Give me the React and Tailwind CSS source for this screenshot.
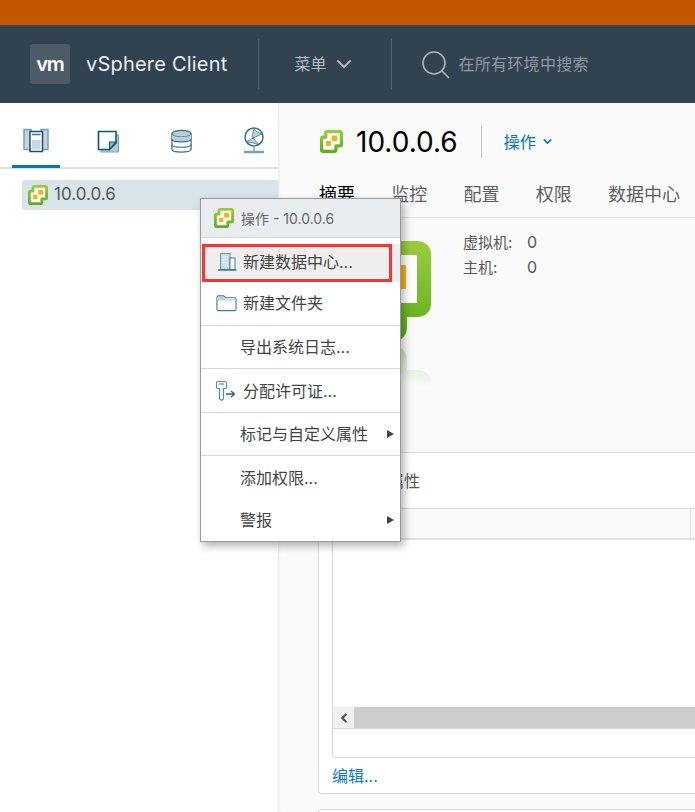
import React from "react";
import { ChevronDown, ChevronLeft } from "lucide-react";

// two overlapping green squares with orange dots
const VcenterIcon = ({ className }) => (
  <svg viewBox="0 0 100 100" className={className}>
    <defs>
      <linearGradient id="vc-green" x1="0" y1="0" x2="0" y2="1">
        <stop offset="0" stopColor="#96cc3c" />
        <stop offset="1" stopColor="#5fae1c" />
      </linearGradient>
    </defs>
    <path
      d="M32 7 H86 Q93 7 93 14 V62 Q93 69 86 69 H69 V86 Q69 93 62 93 H14 Q7 93 7 86 V38 Q7 31 14 31 H25 V14 Q25 7 32 7 Z"
      fill="#fff"
      stroke="url(#vc-green)"
      strokeWidth="14"
      strokeLinejoin="round"
    />
    <rect x="51" y="24" width="24" height="24" fill="#f9b117" />
    <rect x="25" y="48" width="22" height="22" fill="#f9b117" />
  </svg>
);

const HostsIcon = () => (
  <svg viewBox="0 0 28 28" className="h-[28px] w-[28px]">
    <path d="M2 2.5 H9 V22.5 H2 Z M19 2.5 H26 V22.5 H19 Z" fill="#c5d4dc" stroke="#7f9fb0" strokeWidth="1.5" />
    <rect x="8" y="4.5" width="12.5" height="20" fill="#fff" stroke="#0f5578" strokeWidth="1.5" />
    <rect x="10" y="13" width="8.5" height="9.5" fill="#c9d8df" />
    <path d="M10 7.5 H18.5" stroke="#2f7396" strokeWidth="1.5" />
  </svg>
);

const VmsIcon = () => (
  <svg viewBox="0 0 24 24" className="h-[24px] w-[24px]">
    <rect x="4" y="5" width="17.5" height="17" fill="#b7cad4" stroke="#7f9fb0" strokeWidth="1" />
    <path d="M1.5 1.5 H19 V13 L12.5 19.5 H1.5 Z" fill="#fff" stroke="#0f5578" strokeWidth="1.6" />
    <path d="M19 12 H12.5 V19.5 Z" fill="#9db9c7" stroke="#0f5578" strokeWidth="1.2" />
  </svg>
);

const StorageIcon = () => (
  <svg viewBox="0 0 24 26" className="h-[25px] w-[23px]">
    <path d="M2 5 V21 C2 25 22 25 22 21 V5 Z" fill="#fff" stroke="#2f7396" strokeWidth="1.3" />
    <ellipse cx="12" cy="5" rx="10" ry="3.5" fill="#bccdd6" stroke="#2f7396" strokeWidth="1.3" />
    <path d="M2 5 C2 9.5 22 9.5 22 5 V10 C22 14 2 14 2 10 Z" fill="#bccdd6" />
    <path d="M2 10.5 C2 14.5 22 14.5 22 10.5 M2 16 C2 20 22 20 22 16" fill="none" stroke="#2f7396" strokeWidth="1.3" />
  </svg>
);

const NetworkIcon = () => (
  <svg viewBox="0 0 24 28" className="h-[28px] w-[24px]">
    <circle cx="12" cy="10" r="9" fill="#fff" stroke="#2f7396" strokeWidth="1.5" />
    <path d="M12 2 C14 5 17 6 20 7 L11 11 L17 18 C13 16 8 15 4 15 L11 11 C10 8 11 5 12 2 Z" fill="#c3d3db" stroke="#2f7396" strokeWidth="0.8" />
    <path d="M12 19 V24" stroke="#7f9fb0" strokeWidth="1.5" />
    <path d="M2 25 H22" stroke="#7f9fb0" strokeWidth="2.5" />
  </svg>
);

const DatacenterIcon = () => (
  <svg viewBox="0 0 20 20" className="h-[20px] w-[20px]">
    <rect x="3.5" y="1.5" width="9.5" height="16" fill="#c5d7e0" stroke="#6f97ab" strokeWidth="1" />
    <path d="M5.5 4.5 H11.5 M5.5 7.5 H11.5 M5.5 10.5 H11.5 M5.5 13.5 H11.5" stroke="#fff" strokeWidth="1.4" strokeDasharray="1.4 0.6" />
    <rect x="13" y="6" width="5" height="11.5" fill="#fff" stroke="#3f7f9f" strokeWidth="1" />
    <path d="M1 18 H19.5" stroke="#2f6f8f" strokeWidth="1.4" />
  </svg>
);

const FolderIcon = () => (
  <svg viewBox="0 0 22 18" className="h-[18px] w-[21px]">
    <path d="M1 3 Q1 1.5 2.5 1.5 H8 L10 3.5 H20 Q21 3.5 21 5 V15.5 Q21 17 19.5 17 H2.5 Q1 17 1 15.5 Z" fill="#fff" stroke="#3f7f9f" strokeWidth="1.2" />
    <path d="M1.5 2.5 H8 L9.5 5 H20.5 V6.5 H1.5 Z" fill="#bcd0da" />
  </svg>
);

const LicenseIcon = () => (
  <svg viewBox="0 0 22 22" className="h-[22px] w-[22px]">
    <path d="M1.5 3 Q1.5 1.5 3 1.5 H10 Q11.5 1.5 11.5 3 V7 Q11.5 8.5 10 8.5 H8.5 V19 L6.5 20.5 L4.5 19 V8.5 H3 Q1.5 8.5 1.5 7 Z" fill="#fff" stroke="#4a90b0" strokeWidth="1.2" />
    <path d="M4 4 H9" stroke="#4a90b0" strokeWidth="1.2" />
    <path d="M11 14 H19 M16 11 L19.5 14 L16 17" fill="none" stroke="#1f6a8c" strokeWidth="1.4" />
  </svg>
);

const SearchIcon = () => (
  <svg viewBox="0 0 30 30" className="h-[30px] w-[30px]" fill="none" stroke="#a9b2b9" strokeWidth="1.6">
    <circle cx="13" cy="13" r="11" />
    <path d="M21 21 L28 28" />
  </svg>
);

const Arrow = () => (
  <span className="absolute right-[6px] h-0 w-0 border-y-[4px] border-l-[7px] border-y-transparent border-l-[#444]" />
);

const MenuRow = ({ icon, label, arrow, className = "", children }) => (
  <div className={`relative flex items-center text-[16px] text-[#444] ${className}`}>
    {icon ? <span className="flex w-[42px] justify-end pr-[6px]">{icon}</span> : null}
    <span className={icon ? "" : "pl-[39px]"}>{label}</span>
    {arrow ? <Arrow /> : null}
    {children}
  </div>
);

const ContextMenu = () => (
  <div className="absolute left-[200px] top-[198px] w-[201px] border border-[#9a9a9a] bg-white shadow-[3px_4px_8px_rgba(0,0,0,0.3)]">
    <div className="flex h-[39px] items-center gap-[7px] border-b border-[#d7d7d7] bg-[#eaedf0] pl-[13px] text-[14px] text-[#666]">
      <VcenterIcon className="h-[20px] w-[20px]" />
      <span>操作 - 10.0.0.6</span>
    </div>
    <MenuRow icon={<DatacenterIcon />} label="新建数据中心..." className="mt-[6px] h-[38px] bg-[#eeeeee] pb-[3px]">
      {/* red marker drawn on top of the row */}
      <span className="absolute left-[1px] top-0 h-full w-[190px] border-[3px] border-[#fb3333]" />
    </MenuRow>
    <MenuRow icon={<FolderIcon />} label="新建文件夹" className="h-[44px] border-b border-[#d7d7d7] pb-[1px]" />
    <MenuRow label="导出系统日志..." className="h-[43px] border-b border-[#d7d7d7]" />
    <MenuRow icon={<LicenseIcon />} label="分配许可证..." className="h-[44px] border-b border-[#d7d7d7]" />
    <MenuRow label="标记与自定义属性" arrow className="h-[43px] border-b border-[#d7d7d7]" />
    <MenuRow label="添加权限..." className="h-[44px]" />
    <MenuRow label="警报" arrow className="h-[41px] pb-[2px]" />
  </div>
);

const Sidebar = () => (
  <aside className="w-[278px] shrink-0 bg-white">
    <div className="flex h-[66px] items-end border-b-2 border-[#e0e0e0]">
      <div className="ml-[12px] flex h-[41px] w-[48px] justify-center border-b-[3px] border-[#0079b8] -mb-[1px]">
        <HostsIcon />
      </div>
      <div className="ml-[37px] flex h-[41px] w-[24px] pt-[3px] -mb-[1px]">
        <VmsIcon />
      </div>
      <div className="ml-[49px] flex h-[41px] pt-[2px] -mb-[1px]">
        <StorageIcon />
      </div>
      <div className="ml-[49px] flex h-[41px] -mb-[1px]">
        <NetworkIcon />
      </div>
    </div>
    <div className="ml-[22px] mt-[11px] flex h-[30px] items-center gap-[6px] rounded-l-[3px] bg-[#d9e4ea] pl-[6px] text-[17px] text-[#565656]">
      <VcenterIcon className="h-[20px] w-[20px]" />
      <span>10.0.0.6</span>
    </div>
  </aside>
);

const Main = () => (
  <main className="min-w-0 flex-1 overflow-hidden bg-[#fafafa] shadow-[inset_3px_0_3px_-2px_rgba(0,0,0,0.08)]">
    <div className="flex h-[75px] items-center pl-[42px] pt-[2px]">
      <VcenterIcon className="h-[23px] w-[23px]" />
      <span className="ml-[13px] text-[28px] text-black">10.0.0.6</span>
      <span className="ml-[23px] h-[32px] w-px bg-[#c4c4c4]" />
      <span className="ml-[22px] text-[16px] text-[#0079b8]">操作</span>
      <ChevronDown className="ml-[5px] h-[13px] w-[13px] text-[#0079b8]" strokeWidth={3} />
    </div>
    <div className="flex h-[40px] items-center gap-[36.25px] border-b border-[#e0e0e0] pb-[6px] pl-[41px] text-[18px] text-[#5f5f5f]">
      <span className="text-black">摘要</span>
      <span>监控</span>
      <span>配置</span>
      <span>权限</span>
      <span className="whitespace-nowrap">数据中心</span>
    </div>
    <div className="flex h-[234px]">
      <div className="ml-[53px] mt-[23px] w-[100px]">
        <VcenterIcon className="h-[100px] w-[100px]" />
        {/* faded mirror image under the big icon */}
        <div className="mt-[5px] h-[42px] overflow-hidden [mask-image:linear-gradient(to_bottom,rgba(0,0,0,0.3),transparent)]">
          <VcenterIcon className="h-[100px] w-[100px] -scale-y-100" />
        </div>
      </div>
      <div className="ml-[32px] mt-[12px] text-[15px] leading-[25px] text-[#565656]">
        <div className="flex">
          <span className="w-[64px]">虚拟机:</span>
          <span className="text-[16px]">0</span>
        </div>
        <div className="flex">
          <span className="w-[64px]">主机:</span>
          <span className="text-[16px]">0</span>
        </div>
      </div>
    </div>
    <section className="ml-[40px] w-[440px] rounded-[3px] border border-[#d7d7d7] bg-white">
      <div className="flex h-[55px] items-center pl-[21px] text-[16px] text-[#565656]">自定义属性</div>
      <div className="ml-[13px] flex h-[250px] flex-col rounded-b-[3px] border border-[#d7d7d7]">
        <div className="h-[31px] border-b-2 border-[#e0e0e0] bg-[#fafafa]">
          <div className="ml-[357px] h-full border-l border-[#e0e0e0]" />
        </div>
        <div className="flex-1" />
        <div className="flex h-[22px] border-b border-[#d7d7d7] bg-[#cdcdcd]">
          <div className="flex w-[21px] items-center justify-center bg-[#f0f0f0]">
            <ChevronLeft className="h-[14px] w-[14px] text-[#555]" strokeWidth={4} />
          </div>
        </div>
        <div className="h-[28px]" />
      </div>
      <div className="flex h-[35px] items-center pl-[13px] text-[16px] text-[#0a7cd6]">编辑...</div>
    </section>
    <section className="ml-[40px] mt-[15px] h-[20px] w-[440px] rounded-t-[3px] border border-[#d7d7d7] bg-white" />
  </main>
);

export default function App() {
  return (
    <div className="relative h-[812px] w-[695px] overflow-hidden bg-white font-['Inter','Noto_Sans_CJK_SC',sans-serif]">
      <div className="h-[25px] bg-[#c25700]" />
      <header className="flex h-[78px] items-center bg-[#314351]">
        <div className="ml-[30px] flex h-[40px] w-[40px] items-center justify-center rounded-[3px] bg-[#4d5b69] text-[20px] font-semibold leading-none tracking-[-1px] text-white">
          vm
        </div>
        <span className="ml-[16px] text-[20px] tracking-[0.2px] text-[#e9eef1]">vSphere Client</span>
        <span className="ml-[31px] h-[50px] w-px bg-[#53626e]" />
        <span className="ml-[35px] text-[16px] text-[#b5bdc3]">菜单</span>
        <ChevronDown className="ml-[6px] h-[24px] w-[24px] text-[#b5bdc3]" strokeWidth={2} />
        <span className="ml-[35px] h-[50px] w-px bg-[#53626e]" />
        <span className="ml-[29px] mt-[2px]">
          <SearchIcon />
        </span>
        <span className="ml-[7px] text-[16px] tracking-[0.3px] text-[#8d99a3]">在所有环境中搜索</span>
      </header>
      <div className="flex h-[709px]">
        <Sidebar />
        <Main />
      </div>
      <ContextMenu />
    </div>
  );
}
